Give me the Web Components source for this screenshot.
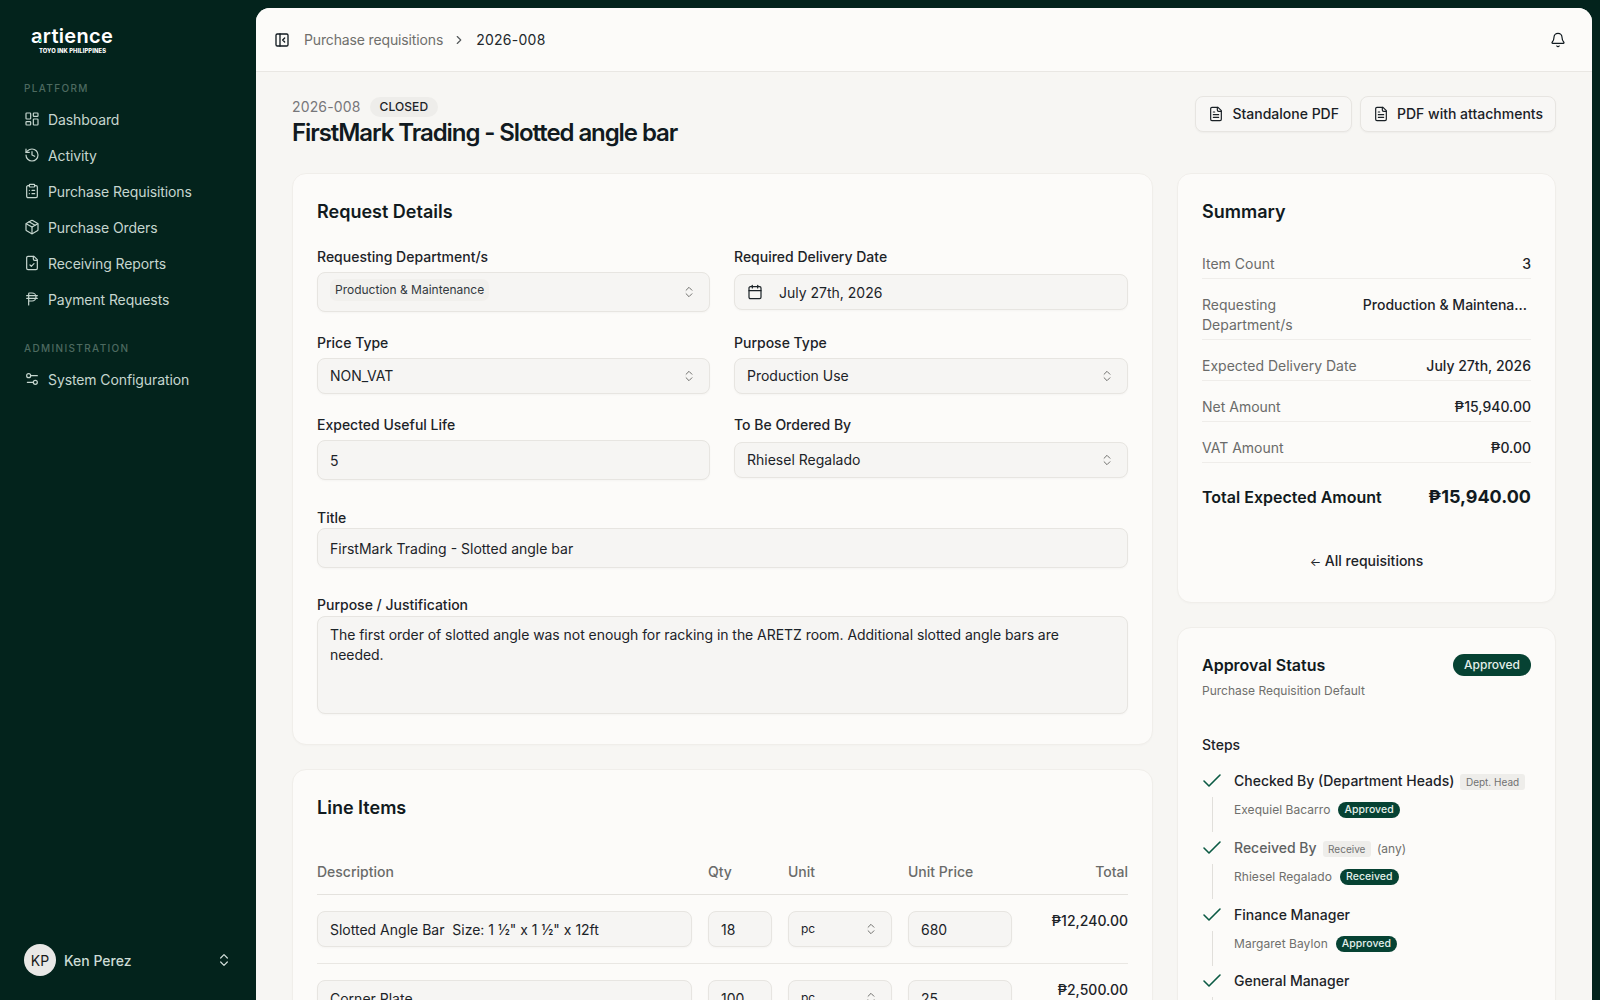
<!DOCTYPE html>
<html lang="en">
<head>
<meta charset="utf-8">
<title>2026-008</title>
<style>
  html, body { margin: 0; height: 100%; overflow: hidden; background: #03231c; }
  body { font-family: Inter, "Liberation Sans", sans-serif; font-size: 14px; color: #111a20; }
</style>
</head>
<body>
<app-shell>
  <app-sidebar slot="sidebar"></app-sidebar>
  <top-bar slot="top"></top-bar>
  <page-head></page-head>
  <div class="cols" style="display:grid;grid-template-columns:minmax(0,1fr) 379px;gap:24px;align-items:start">
    <div style="display:grid;gap:24px">
      <request-details></request-details>
      <line-items></line-items>
    </div>
    <div style="display:grid;gap:24px">
      <summary-card></summary-card>
      <approval-card></approval-card>
    </div>
  </div>
</app-shell>

<script>
const ICONS = {
  dashboard: '<rect x="3" y="3" width="7" height="9" rx="1"/><rect x="14" y="3" width="7" height="5" rx="1"/><rect x="14" y="12" width="7" height="9" rx="1"/><rect x="3" y="16" width="7" height="5" rx="1"/>',
  history: '<path d="M3 12a9 9 0 1 0 9-9 9.75 9.75 0 0 0-6.74 2.74L3 8"/><path d="M3 3v5h5"/><path d="M12 7v5l4 2"/>',
  clipboard: '<rect x="8" y="2" width="8" height="4" rx="1"/><path d="M16 4h2a2 2 0 0 1 2 2v14a2 2 0 0 1-2 2H6a2 2 0 0 1-2-2V6a2 2 0 0 1 2-2h2"/><path d="M12 11h4"/><path d="M12 16h4"/><path d="M8 11h.01"/><path d="M8 16h.01"/>',
  package: '<path d="M11 21.73a2 2 0 0 0 2 0l7-4A2 2 0 0 0 21 16V8a2 2 0 0 0-1-1.73l-7-4a2 2 0 0 0-2 0l-7 4A2 2 0 0 0 3 8v8a2 2 0 0 0 1 1.73z"/><path d="M12 22V12"/><polyline points="3.29 7 12 12 20.71 7"/><path d="m7.5 4.27 9 5.15"/>',
  filecheck: '<path d="M15 2H6a2 2 0 0 0-2 2v16a2 2 0 0 0 2 2h12a2 2 0 0 0 2-2V7Z"/><path d="M14 2v4a2 2 0 0 0 2 2h4"/><path d="m9 15 2 2 4-4"/>',
  peso: '<path d="M20 11H4"/><path d="M20 7H4"/><path d="M7 21V4a1 1 0 0 1 1-1h4a1 1 0 0 1 0 12H7"/>',
  settings: '<path d="M20 7h-9"/><path d="M14 17H5"/><circle cx="17" cy="17" r="3"/><circle cx="7" cy="7" r="3"/>',
  panel: '<rect x="3" y="3" width="18" height="18" rx="2"/><path d="M9 3v18"/><path d="m16 15-3-3 3-3"/>',
  chevron: '<path d="m9 18 6-6-6-6"/>',
  bell: '<path d="M10.268 21a2 2 0 0 0 3.464 0"/><path d="M3.262 15.326A1 1 0 0 0 4 17h16a1 1 0 0 0 .74-1.673C19.41 13.956 18 12.499 18 8A6 6 0 0 0 6 8c0 4.499-1.411 5.956-2.738 7.326"/>',
  filetext: '<path d="M15 2H6a2 2 0 0 0-2 2v16a2 2 0 0 0 2 2h12a2 2 0 0 0 2-2V7Z"/><path d="M14 2v4a2 2 0 0 0 2 2h4"/><path d="M10 9H8"/><path d="M16 13H8"/><path d="M16 17H8"/>',
  calendar: '<path d="M8 2v4"/><path d="M16 2v4"/><rect x="3" y="4" width="18" height="18" rx="2"/><path d="M3 10h18"/>',
  updown: '<path d="m7 15 5 5 5-5"/><path d="m7 9 5-5 5 5"/>',
  check: '<path d="M20 6 9 17l-5-5"/>'
};

// small helper so every class below stays a few lines
function define(tag, render) {
  customElements.define(tag, class extends HTMLElement {
    connectedCallback() {
      if (this.shadowRoot) return;
      this.attachShadow({ mode: 'open' });
      this.shadowRoot.innerHTML = render(this);
    }
  });
}

define('x-icon', el => `
  <style>
    :host { display: inline-flex; flex: none; width: ${el.getAttribute('size') || 16}px; height: ${el.getAttribute('size') || 16}px; }
    svg { width: 100%; height: 100%; fill: none; stroke: currentColor; stroke-width: ${el.getAttribute('sw') || 2}; stroke-linecap: round; stroke-linejoin: round; }
  </style>
  <svg viewBox="0 0 24 24">${ICONS[el.getAttribute('name')]}</svg>`);

define('app-shell', () => `
  <style>
    :host { display: flex; height: 100vh; background: #03231c; }
    .side { width: 256px; flex: none; }
    .inset { flex: 1; min-width: 0; margin: 8px 8px 0 0; background: #f7f6f3; border-radius: 14px 14px 0 0; overflow: hidden; }
    .page { padding: 24px 36px; }
  </style>
  <div class="side"><slot name="sidebar"></slot></div>
  <div class="inset">
    <slot name="top"></slot>
    <div class="page"><slot></slot></div>
  </div>`);

define('nav-item', el => `
  <style>
    :host { display: flex; align-items: center; gap: 8px; height: 36px; color: #c6d6cf; font-size: 14px; letter-spacing: -0.1px; }
  </style>
  <x-icon name="${el.getAttribute('icon')}" size="16" sw="1.8"></x-icon><slot></slot>`);

define('app-sidebar', () => `
  <style>
    :host { display: flex; flex-direction: column; height: 100vh; box-sizing: border-box; padding: 0 24px 0 24px; font-family: Inter, sans-serif; }
    .logo { position: relative; width: 84px; margin: 27px 0 0 7px; color: #fff; height: 28px; }
    .word { font: 600 20px/18px Inter, sans-serif; letter-spacing: 0.3px; display: block; }
    .sub { font: 800 5.8px/8px Inter, sans-serif; display: block; text-align: center; margin: 2px 0 0 -1px; white-space: nowrap; letter-spacing: .1px; }
    .dot { position: absolute; left: 8px; top: 12px; width: 3px; height: 3px; border-radius: 50%; background: #18b98a; }
    .group { font-size: 10px; font-weight: 500; letter-spacing: 1.35px; color: #4d6a60; line-height: 12px; }
    .g1 { margin-top: 27px; margin-bottom: 7px; }
    .g2 { margin-top: 25px; margin-bottom: 7px; }
    .spacer { flex: 1; }
    .user { display: flex; align-items: center; gap: 8px; margin-bottom: 24px; color: #cddcd6; font-weight: 500; }
    .avatar { width: 32px; height: 32px; border-radius: 50%; background: #e9e8e6; color: #1a1a1a; display: flex; align-items: center; justify-content: center; font-size: 14px; font-weight: 400; }
    .name { flex: 1; }
    x-icon { color: #d4dfdb; }
  </style>
  <div class="logo"><span class="word">artience</span><span class="dot"></span><span class="sub">TOYO INK PHILIPPINES</span></div>
  <div class="group g1">PLATFORM</div>
  <nav-item icon="dashboard">Dashboard</nav-item>
  <nav-item icon="history">Activity</nav-item>
  <nav-item icon="clipboard">Purchase Requisitions</nav-item>
  <nav-item icon="package">Purchase Orders</nav-item>
  <nav-item icon="filecheck">Receiving Reports</nav-item>
  <nav-item icon="peso">Payment Requests</nav-item>
  <div class="group g2">ADMINISTRATION</div>
  <nav-item icon="settings">System Configuration</nav-item>
  <div class="spacer"></div>
  <div class="user"><span class="avatar">KP</span><span class="name">Ken Perez</span><x-icon name="updown" size="16" sw="1.8"></x-icon></div>`);

define('top-bar', () => `
  <style>
    :host { display: flex; align-items: center; height: 63px; background: #fcfbf9; border-bottom: 1px solid #e9e7e3; padding: 0 26px 0 18px; color: #111a20; }
    .crumb { color: #6f6f6c; margin-left: 14px; letter-spacing: -0.14px; }
    .cur { color: #22282c; letter-spacing: .25px; }
    .sep { color: #55595b; margin: 0 10px 0 9px; }
    .end { margin-left: auto; }
  </style>
  <x-icon name="panel" size="16"></x-icon>
  <span class="crumb">Purchase requisitions</span>
  <x-icon class="sep" name="chevron" size="14"></x-icon>
  <span class="cur">2026-008</span>
  <x-icon class="end" name="bell" size="16" sw="1.8"></x-icon>`);

define('pdf-button', () => `
  <style>
    :host { display: inline-flex; align-items: center; gap: 8px; height: 36px; box-sizing: border-box; padding: 0 12px 1px; background: #f8f7f5; border: 1px solid #e7e5e1; border-radius: 8px; font-size: 14px; font-weight: 500; color: #1a2126; box-shadow: 0 1px 2px rgba(0,0,0,.04); white-space: nowrap; }
  </style>
  <x-icon name="filetext" size="16" sw="1.8"></x-icon><slot></slot>`);

define('page-head', () => `
  <style>
    :host { display: flex; justify-content: space-between; align-items: flex-start; margin-bottom: 24px; height: 53px; }
    .meta { display: flex; align-items: center; gap: 9px; height: 20px; color: #77777a; font-size: 14px; }
    .num { letter-spacing: .15px; }
    .status { background: #eeedea; color: #1c2328; font-size: 12px; font-weight: 500; border-radius: 10px; padding: 0 10px; line-height: 20px; letter-spacing: .08px; position: relative; top: 1px; }
    h1 { margin: 0; font-size: 24px; font-weight: 600; letter-spacing: -1.08px; line-height: 32px; margin-top: 1px; }
    .btns { display: flex; gap: 8px; }
  </style>
  <div>
    <div class="meta"><span class="num">2026-008</span><span class="status">CLOSED</span></div>
    <h1>FirstMark Trading - Slotted angle bar</h1>
  </div>
  <div class="btns"><pdf-button>Standalone PDF</pdf-button><pdf-button>PDF with attachments</pdf-button></div>`);

define('x-card', () => `
  <style>
    :host { display: block; background: #fcfbf9; border: 1px solid #f0eeea; border-radius: 14px; padding: 24px; box-shadow: 0 1px 2px rgba(0,0,0,.02); }
  </style>
  <slot></slot>`);

define('x-field', el => `
  <style>
    :host { display: block; min-width: 0; }
    label { display: block; font-size: 14px; font-weight: 500; line-height: 20px; margin-bottom: ${el.getAttribute('gap') || 5}px; color: #1c2328; }
  </style>
  <label>${el.getAttribute('label')}</label><slot></slot>`);

const boxCss = `
  display: flex; align-items: center; box-sizing: border-box; background: #f6f5f3; border: 1px solid #e7e5e1;
  border-radius: 8px; padding: 0 12px; font-size: 14px; color: #1c2328; box-shadow: 0 1px 2px rgba(0,0,0,.03);`;

define('x-select', el => `
  <style>
    :host { ${boxCss} height: ${el.getAttribute('h') || 36}px; justify-content: space-between; white-space: nowrap; }
    :host([small]) { font-size: 12px; }
    span { padding-bottom: 1px; }
    x-icon { color: #6f6f6c; margin-right: 1px; }
  </style>
  <span><slot></slot></span><x-icon name="updown" size="14" sw="1.7"></x-icon>`);

define('x-input', el => `
  <style>
    :host { ${boxCss} height: ${el.getAttribute('h') || 40}px; white-space: nowrap; overflow: hidden; }
    :host([area]) { align-items: flex-start; padding-top: 8px; line-height: 20px; white-space: normal; letter-spacing: -0.05px; }
  </style>
  <slot></slot>`);

define('x-date', () => `
  <style>
    :host { ${boxCss} height: 36px; gap: 16px; }
  </style>
  <x-icon name="calendar" size="16" sw="1.8"></x-icon><slot></slot>`);

define('x-tag', () => `
  <style>
    :host { display: inline-block; background: #f1f0ed; border-radius: 7px; padding: 0 5px; font-size: 12px; line-height: 22px; color: #33393d; position: relative; top: -2px; }
  </style>
  <slot></slot>`);

define('request-details', () => `
  <style>
    :host { display: block; }
    h2 { margin: 0 0 21px; font-size: 18px; font-weight: 600; line-height: 28px; }
    .grid { display: grid; grid-template-columns: calc(50% - 12.5px) minmax(0,1fr); gap: 21px 24px; }
    .wide { grid-column: 1 / -1; margin-top: 7px; }
    .last { margin-top: 6px; margin-bottom: 6px; }
  </style>
  <x-card>
    <h2>Request Details</h2>
    <div class="grid">
      <x-field label="Requesting Department/s"><x-select h="40"><x-tag>Production &amp; Maintenance</x-tag></x-select></x-field>
      <x-field gap="7" label="Required Delivery Date"><x-date>July 27th, 2026</x-date></x-field>
      <x-field label="Price Type"><x-select>NON_VAT</x-select></x-field>
      <x-field label="Purpose Type"><x-select>Production Use</x-select></x-field>
      <x-field label="Expected Useful Life"><x-input>5</x-input></x-field>
      <x-field gap="7" label="To Be Ordered By"><x-select>Rhiesel Regalado</x-select></x-field>
      <x-field class="wide" gap="0" label="Title"><x-input>FirstMark Trading - Slotted angle bar</x-input></x-field>
      <x-field class="wide last" gap="1" label="Purpose / Justification"><x-input area h="98">The first order of slotted angle was not enough for racking in the ARETZ room. Additional slotted angle bars are needed.</x-input></x-field>
    </div>
  </x-card>`);

define('line-row', el => `
  <style>
    :host { display: grid; grid-template-columns: minmax(0,1fr) 64px 104px 104px 100px; gap: 16px; padding: 16px 0; border-bottom: 1px solid #e9e7e3; }
    .total { text-align: right; font-weight: 500; font-size: 14px; line-height: 20px; color: #1c2328; }
    .d { white-space: pre; }
  </style>
  <x-input h="36"><span class="d">${el.getAttribute('desc')}</span></x-input>
  <x-input h="36">${el.getAttribute('qty')}</x-input>
  <x-select small>pc</x-select>
  <x-input h="36">${el.getAttribute('price')}</x-input>
  <div class="total">${el.getAttribute('total')}</div>`);

define('line-items', () => `
  <style>
    :host { display: block; }
    h2 { margin: 0 0 40px; font-size: 18px; font-weight: 600; line-height: 28px; }
    .head { display: grid; grid-template-columns: minmax(0,1fr) 64px 104px 104px 100px; gap: 16px; padding-bottom: 12px; border-bottom: 1px solid #e4e2de; color: #6a6b6a; font-weight: 500; line-height: 20px; }
    .r { text-align: right; }
  </style>
  <x-card>
    <h2>Line Items</h2>
    <div class="head"><span>Description</span><span>Qty</span><span>Unit</span><span>Unit Price</span><span class="r">Total</span></div>
    <line-row desc="Slotted Angle Bar  Size: 1 ½&quot; x 1 ½&quot; x 12ft" qty="18" price="680" total="₱12,240.00"></line-row>
    <line-row desc="Corner Plate" qty="100" price="25" total="₱2,500.00"></line-row>
  </x-card>`);

define('summary-row', el => `
  <style>
    :host { display: flex; justify-content: space-between; gap: 16px; padding-bottom: 4px; margin-bottom: 16px; border-bottom: 1px solid #efedea; line-height: 20px; }
    .k { color: #6a6b6a; flex: none; max-width: ${el.getAttribute('kw') || 'none'}; }
    .v { font-weight: 500; color: #1c2328; text-align: right; white-space: nowrap; }
  </style>
  <span class="k">${el.getAttribute('k')}</span><span class="v"><slot></slot></span>`);

define('summary-card', () => `
  <style>
    :host { display: block; }
    h2 { margin: 0 0 28px; font-size: 18px; font-weight: 600; line-height: 28px; }
    .total { display: flex; justify-content: space-between; align-items: center; margin-top: 20px; font-size: 16px; font-weight: 600; line-height: 28px; }
    .total b { font-size: 18px; font-weight: 700; }
    .back { text-align: center; font-weight: 500; line-height: 20px; margin: 40px 0 6px; color: #1c2328; }
    .back i { font-style: normal; font-size: 12px; font-weight: 400; }
    .trunc { display: inline-block; padding-right: 4px; }
  </style>
  <x-card>
    <h2>Summary</h2>
    <summary-row k="Item Count">3</summary-row>
    <summary-row k="Requesting Department/s" kw="110px"><span class="trunc">Production &amp; Maintena...</span></summary-row>
    <summary-row k="Expected Delivery Date">July 27th, 2026</summary-row>
    <summary-row k="Net Amount">₱15,940.00</summary-row>
    <summary-row k="VAT Amount">₱0.00</summary-row>
    <div class="total"><span>Total Expected Amount</span><b>₱15,940.00</b></div>
    <div class="back"><i>←</i> All requisitions</div>
  </x-card>`);

define('x-badge', () => `
  <style>
    :host { display: inline-block; background: #064233; color: #e4f0eb; border-radius: 999px; font-size: 10.5px; font-weight: 500; line-height: 16px; padding: 0 6px; white-space: nowrap; }
    :host([big]) { font-size: 12px; line-height: 22px; padding: 0 11px; }
  </style>
  <slot></slot>`);

define('role-tag', () => `
  <style>
    :host { display: inline-block; background: #eeedea; color: #717272; border-radius: 3px; font-size: 10px; font-weight: 400; line-height: 16px; padding: 0 5.5px; margin-left: 6px; white-space: nowrap; }
  </style>
  <slot></slot>`);

define('approval-step', el => `
  <style>
    :host { display: grid; grid-template-columns: 20px 1fr; grid-template-rows: 20px auto; align-content: start; column-gap: 12px; height: 67px; }
    :host([short]) { height: 66px; }
    .chk { color: #0b5a44; height: 20px; display: flex; align-items: center; margin-left: -2px; }
    .t { font-weight: 500; line-height: 20px; white-space: nowrap; color: ${el.hasAttribute('muted') ? '#5e6162' : '#1c2328'}; }
    .rail { width: 1px; background: #e1dfdb; justify-self: center; margin-top: 6px; height: 35px; }
    .who { display: flex; align-items: center; gap: 8px; margin-top: 10px; font-size: 12px; line-height: 18px; letter-spacing: .05px; height: 18px; color: #6f6f6c; white-space: nowrap; }
  </style>
  <div class="chk"><x-icon name="check" size="24" sw="1.6"></x-icon></div>
  <div class="t"><slot name="title"></slot></div>
  <div class="rail"></div>
  <div class="who"><slot></slot></div>`);

define('approval-card', () => `
  <style>
    :host { display: block; }
    .top { display: flex; justify-content: space-between; align-items: center; height: 26px; }
    h3 { margin: 0; font-size: 16px; font-weight: 600; letter-spacing: 0; }
    .sub { font-size: 12px; color: #6f6f6c; line-height: 16px; margin-top: 5px; }
    .steps { font-weight: 500; line-height: 20px; margin: 36px 0 16px; color: #1c2328; }
    .any { font-size: 12px; font-weight: 400; color: #6f6f6c; margin-left: 6px; }
  </style>
  <x-card>
    <div class="top"><h3>Approval Status</h3><x-badge big>Approved</x-badge></div>
    <div class="sub">Purchase Requisition Default</div>
    <div class="steps">Steps</div>
    <approval-step><span slot="title">Checked By (Department Heads)<role-tag>Dept. Head</role-tag></span>Exequiel Bacarro <x-badge>Approved</x-badge></approval-step>
    <approval-step muted><span slot="title">Received By<role-tag>Receive</role-tag><span class="any">(any)</span></span>Rhiesel Regalado <x-badge>Received</x-badge></approval-step>
    <approval-step short><span slot="title">Finance Manager</span>Margaret Baylon <x-badge>Approved</x-badge></approval-step>
    <approval-step><span slot="title">General Manager</span></approval-step>
  </x-card>`);
</script>
</body>
</html>
